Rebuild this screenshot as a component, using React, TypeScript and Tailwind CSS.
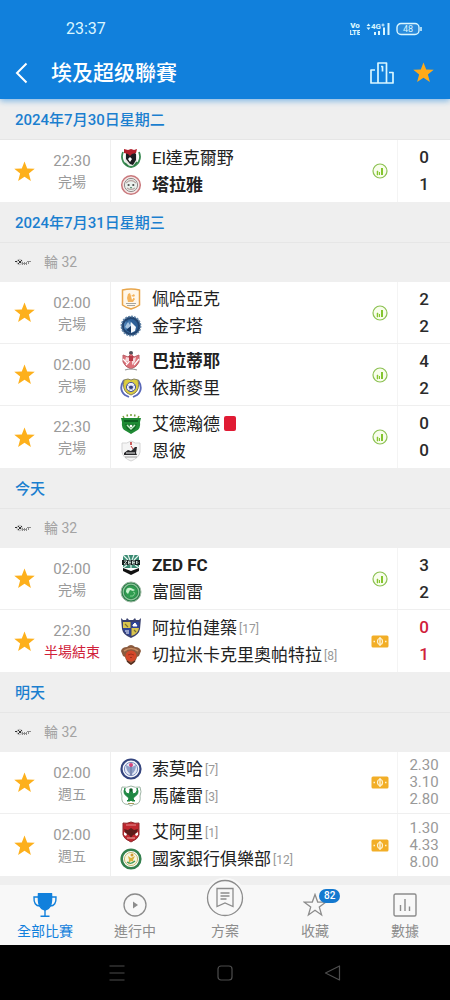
import React from 'react';

type CrestName =
  | 'dakhleya' | 'talaea' | 'pharco' | 'pyramids' | 'baladiyat' | 'ismaily' | 'ittihad' | 'enppi'
  | 'zed' | 'future' | 'mokawloon' | 'ceramica' | 'smouha' | 'masry' | 'ahly' | 'nbe';

interface Team {
  name: string;
  crest: CrestName;
  rank?: number;
  winner?: boolean;
  redCard?: boolean;
}

interface Match {
  time: string;
  status: string;
  teams: Team[];
  scores?: string[];
  odds?: string[];
  live?: boolean;
  badge: 'stats' | 'bet';
}

interface Day {
  title: string;
  round?: string;
  matches: Match[];
}

const days: Day[] = [
  {
    title: '2024年7月30日星期二',
    matches: [
      {
        time: '22:30', status: '完場', badge: 'stats', scores: ['0', '1'],
        teams: [{ name: 'El達克爾野', crest: 'dakhleya' }, { name: '塔拉雅', crest: 'talaea', winner: true }],
      },
    ],
  },
  {
    title: '2024年7月31日星期三',
    round: '輪 32',
    matches: [
      {
        time: '02:00', status: '完場', badge: 'stats', scores: ['2', '2'],
        teams: [{ name: '佩哈亞克', crest: 'pharco' }, { name: '金字塔', crest: 'pyramids' }],
      },
      {
        time: '02:00', status: '完場', badge: 'stats', scores: ['4', '2'],
        teams: [{ name: '巴拉蒂耶', crest: 'baladiyat', winner: true }, { name: '依斯麥里', crest: 'ismaily' }],
      },
      {
        time: '22:30', status: '完場', badge: 'stats', scores: ['0', '0'],
        teams: [{ name: '艾德瀚德', crest: 'ittihad', redCard: true }, { name: '恩彼', crest: 'enppi' }],
      },
    ],
  },
  {
    title: '今天',
    round: '輪 32',
    matches: [
      {
        time: '02:00', status: '完場', badge: 'stats', scores: ['3', '2'],
        teams: [{ name: 'ZED FC', crest: 'zed', winner: true }, { name: '富圖雷', crest: 'future' }],
      },
      {
        time: '22:30', status: '半場結束', badge: 'bet', scores: ['0', '1'], live: true,
        teams: [{ name: '阿拉伯建築', crest: 'mokawloon', rank: 17 }, { name: '切拉米卡克里奧帕特拉', crest: 'ceramica', rank: 8 }],
      },
    ],
  },
  {
    title: '明天',
    round: '輪 32',
    matches: [
      {
        time: '02:00', status: '週五', badge: 'bet', odds: ['2.30', '3.10', '2.80'],
        teams: [{ name: '索莫哈', crest: 'smouha', rank: 7 }, { name: '馬薩雷', crest: 'masry', rank: 3 }],
      },
      {
        time: '02:00', status: '週五', badge: 'bet', odds: ['1.30', '4.33', '8.00'],
        teams: [{ name: '艾阿里', crest: 'ahly', rank: 1 }, { name: '國家銀行俱樂部', crest: 'nbe', rank: 12 }],
      },
    ],
  },
];

// Each crest is drawn on a 22x22 grid
const crests: Record<CrestName, React.ReactNode> = {
  dakhleya: (
    <>
      <path d="M3 5C0 12 4 19 11 20C18 19 22 12 19 5" fill="#fff" stroke="#3c8b54" strokeWidth="1.8" />
      <ellipse cx="11" cy="11" rx="6.5" ry="7.5" fill="#e8e8e4" />
      <path d="M6 5l3 2 4-3 3 3v6l-3 5-3-1-4-5z" fill="#1c1c20" />
      <path d="M4 2l4 1 3-1 3 1 3-1-1 4-4 1-2 2-2-2-4-1z" fill="#b3202c" />
      <path d="M8 12l2-2 2 2-2 3z" fill="#fff" />
      <path d="M5 16l3 3M17 15l-3 4" stroke="#2c7a43" strokeWidth="1.5" />
    </>
  ),
  talaea: (
    <>
      <circle cx="11" cy="11" r="9.3" fill="#f4e5e4" stroke="#c9787c" strokeWidth="1.5" />
      <circle cx="11" cy="11" r="6.6" fill="#e9f0ec" stroke="#8f8a8a" strokeWidth="1" />
      <path d="M6 9q5-5 10 0M7 14q4 3 8 0" fill="none" stroke="#b9a7a4" strokeWidth="1.2" />
      <circle cx="8.6" cy="11" r="1.1" fill="#4b4b4b" />
      <circle cx="13.3" cy="11" r="1.1" fill="#4b4b4b" />
      <path d="M10 13h2l-1 2z" fill="#3d7a5c" />
    </>
  ),
  pharco: (
    <>
      <path d="M2.500 2Q11 0 19.500 2V17Q17 19 11 21Q5 19 2.500 17Z" fill="#fff7ea" stroke="#e8a54a" strokeWidth="1.5" />
      <path d="M8 6l2-1 1 3 3-2 1 2-2 1 2 2-2 3H8l-1-4z" fill="#f5b45c" />
      <path d="M11 8l3 1-2 3z" fill="#fff" />
      <path d="M6 15.500h10M7 17.500h8" stroke="#a5a5a0" />
    </>
  ),
  pyramids: (
    <>
      <circle cx="11" cy="11" r="9.600" fill="#22446f" stroke="#6486a8" strokeWidth="1.600" strokeDasharray="2 1" />
      <circle cx="11" cy="11" r="7" fill="#2d5f96" />
      <path d="M4 13V9l2-3 1 3 2-4 2 3v10l-4-2z" fill="#4c80b4" />
      <path d="M5 12l3-5 2 3 1-4v5l-3 3z" fill="#a9c6e2" />
      <path d="M11 7l5 5-1 4-4 2z" fill="#f4f8fb" />
      <path d="M11 11v7l-5-3z" fill="#173a66" />
    </>
  ),
  baladiyat: (
    <>
      <circle cx="11" cy="3" r="2" fill="#525058" />
      <path d="M3 5l5 2 3-3 3 3 5-2v7q-2 5-8 7q-6-2-8-7z" fill="#dc7078" stroke="#b96168" />
      <path d="M6 7l4 1v4l-5-1zM12 9l4-2-1 5-3 3z" fill="#fff" fillOpacity=".75" />
      <path d="M3 9l4 4M19 9l-5 6M6 15l3-3" stroke="#fff" strokeWidth="1.200" />
      <path d="M9 6h4v5H9z" fill="#b73845" />
      <path d="M5 20q6-2 12 0" stroke="#969696" strokeWidth="1.200" fill="none" />
    </>
  ),
  ismaily: (
    <>
      <path d="M4 3Q-2 12 5 18L9 20M18 3Q24 12 17 18L13 20" fill="none" stroke="#5968b8" strokeWidth="1.800" />
      <path d="M4 3l4-1 3 1 3-1 4 1q2 9-3 13l-4 2-4-2Q2 12 4 3z" fill="#dccd3f" stroke="#837f61" />
      <circle cx="11" cy="10" r="4.600" fill="#eef0ff" stroke="#4d5796" />
      <path d="M9.800 9h2.400l.8 1.800-2 1.500-2-1.500zM7 8l1.500 1M15 8l-1.500 1M9 14l.5-1.500M13 14l-.5-1.500" fill="#34437f" stroke="#34437f" strokeWidth=".6" />
    </>
  ),
  ittihad: (
    <>
      <path d="M3 3l1 2M7 1.500l.5 2M11 1v2M15 1.500l-.5 2M19 3l-1 2" stroke="#79a13c" strokeWidth="1.500" />
      <path d="M1 5h20l-1 4q1 7-4 9l-5 3-5-3q-5-2-4-9z" fill="#1f8a34" />
      <path d="M4 7h14v2H4z" fill="#0c5f1f" />
      <path d="M5 11l4 1 2-1 2 1 4-1-2 5-4 2-4-2z" fill="#126b25" />
      <path d="M7 12l4 4 4-4" fill="none" stroke="#c7ecc9" strokeWidth="1.500" />
      <circle cx="11" cy="13" r="1.300" fill="#fff" />
    </>
  ),
  enppi: (
    <>
      <path d="M2 3q5 1 9-2 4 3 9 2v9q-1 6-9 9-8-3-9-9z" fill="#f5f5f5" stroke="#d4d4d4" />
      <path d="M11 2v3" stroke="#c23838" strokeWidth="1.600" />
      <path d="M11 6l2 3" stroke="#c23838" />
      <path d="M4 13l4-3 3 1 4-4h2l-1 6 1 2H4z" fill="#28282b" />
      <path d="M6 13h9" stroke="#f2f2f2" />
      <path d="M5 17h12" stroke="#9a9a9a" />
    </>
  ),
  zed: (
    <>
      <path d="M3 1h16v13H3z" fill="#3a8a72" />
      <path d="M3 1l5 5M8 1l2 5M14 1l-2 5M19 1l-5 5M3 14l4-3M19 14l-4-3M11 10v4" stroke="#e6f5ef" strokeWidth="1.200" />
      <path d="M2 6h18v5H2z" fill="#16211f" />
      <path d="M4 7h3l-3 3h3M11 7H8.500v3H11M8.500 8.500H11M15 7h-2.500v3H15M12.500 8.500H15M16.500 7v3q3-1.500 0-3" fill="none" stroke="#e9f7f1" strokeWidth=".8" />
      <path d="M3 14l8 3 8-3v3l-8 4-8-4z" fill="#111" />
    </>
  ),
  future: (
    <>
      <circle cx="11" cy="11" r="10" fill="#2b7d49" stroke="#9db8a2" />
      <circle cx="11" cy="11" r="7.800" fill="none" stroke="#8dc79b" strokeWidth="1.200" />
      <circle cx="11" cy="11" r="6.500" fill="#2f9c50" />
      <path d="M6 11q0-5 5-4l4 2-2 1-3-1-1 2-1 2z" fill="#c9f2cf" />
      <path d="M13 11l2 1-2 3h-3" fill="none" stroke="#7fcd90" />
    </>
  ),
  mokawloon: (
    <>
      <path d="M1 1l2 2h3l1-2 2 2h4l2-2 1 2h3l2-2-1 11q-1 6-9 9-8-3-9-9z" fill="#39406d" />
      <path d="M3 5h7.500v6H3zM11.500 11H19q-1 6-7.500 8z" fill="#d9c44f" />
      <path d="M11.500 5H19v6h-7.500zM3 11h7.500v8Q4 17 3 11z" fill="#2f4497" />
      <path d="M13 8l2-2 2 3h-4zM5 14h4M6 16h3" stroke="#fff" fill="#fff" />
      <path d="M5 7l3 3M14 13l2 2" stroke="#7b7031" strokeWidth="1.200" />
    </>
  ),
  ceramica: (
    <>
      <path d="M1 7q1-4 6-4 4-4 8 0 5 0 6 4l-2 5-2 1q-1 5-6 8-5-3-6-8l-2-1z" fill="#8b5a3d" />
      <path d="M4 7q7-5 14 0" fill="none" stroke="#c98d62" strokeWidth="1.600" />
      <circle cx="11" cy="12" r="5.500" fill="#d4482a" />
      <path d="M8 11q3-2 6 0M10 14l1-1 1 1" fill="none" stroke="#a32f1d" />
      <path d="M7 17l4 3 4-3" fill="none" stroke="#512c20" strokeWidth="1.300" />
    </>
  ),
  smouha: (
    <>
      <circle cx="11" cy="11" r="9.500" fill="#f4f6fb" stroke="#35457e" strokeWidth="2.200" />
      <circle cx="11" cy="11" r="6.600" fill="#e5eaf6" stroke="#7c8cbb" />
      <path d="M6 7l4 2v7q-4-3-4-9zM16 7l-4 2v7q4-3 4-9z" fill="#8fa1c9" />
      <path d="M11 7v10" stroke="#4f5f94" strokeWidth="1.400" />
      <circle cx="11" cy="7" r="2" fill="#d5447b" />
    </>
  ),
  masry: (
    <>
      <path d="M2 2q5 1 9-1 4 2 9 1 2 5 0 9 1 6-3 8-4 0-6 2-2-2-6-2-4-2-3-8-2-4 0-9z" fill="#fff" stroke="#9fb5a5" />
      <path d="M5 3q-1 5 4 6l1-3h2l1 3q5-1 4-6 3 6-3 9l-1 2 2 2h-3l-1-1-1 1H7l2-2-1-2Q2 9 5 3z" fill="#1f8843" stroke="#1f8843" />
      <circle cx="11" cy="5" r="1.800" fill="#145d2c" />
      <path d="M8 18.500h6" stroke="#a99b5b" />
    </>
  ),
  ahly: (
    <>
      <path d="M3 2q4 1 8-1 4 2 8 1v12q-1 4-8 7-7-3-8-7z" fill="#c0272f" stroke="#8f2a2d" />
      <path d="M6 4h10" stroke="#e58d8d" />
      <path d="M4 8l4 1 3-2 3 2 4-1-2 5-3 1-2 3-2-3-3-1z" fill="#5e1d1b" />
      <path d="M4 11l3 2-1 2-2-1zM18 11l-3 2 1 2 2-1z" fill="#fff" />
      <path d="M7 17h8" stroke="#eab0ac" />
    </>
  ),
  nbe: (
    <>
      <circle cx="11" cy="11" r="9.300" fill="#fff" stroke="#34804e" strokeWidth="2.600" />
      <circle cx="11" cy="11" r="6.600" fill="#f7f4df" stroke="#b6a955" strokeWidth=".8" />
      <circle cx="12" cy="7" r="1.500" fill="#cf9b33" />
      <path d="M8 8l3 2 4-2-2 4 1 2-3-1-3 3 1-4z" fill="#d8b13b" />
      <path d="M7 14q4 3 8-1" stroke="#3d9a58" fill="none" strokeWidth="1.200" />
    </>
  ),
};

const Star = ({ className }: { className: string }) => (
  <svg viewBox="0 0 24 24" className={className} fill="currentColor" aria-hidden="true">
    <path d="M12 .5l3.100 8.100 8.600.3-6.700 5.400 2.300 8.500-7.300-4.800-7.300 4.800 2.300-8.500L.3 8.900l8.600-.3z" />
  </svg>
);

const StatsBadge = () => (
  <svg viewBox="0 0 16 16" className="size-4" fill="none" aria-hidden="true">
    <circle cx="8" cy="8" r="7" fill="#f8fdec" stroke="#8cc152" strokeWidth="1.200" />
    <path d="M5 8h1v4H5zM7 9h1v3H7zM9 5h2v7H9z" fill="#84c52f" />
    <path d="M5 8h1v4H5z" stroke="#84c52f" strokeWidth=".5" />
  </svg>
);

const BetBadge = () => (
  <svg viewBox="0 0 18 13" className="h-[13px] w-[18px]" fill="none" aria-hidden="true">
    <rect x=".5" y=".5" width="17" height="12" rx="1.500" fill="#f2ae27" />
    <ellipse cx="9" cy="6.500" rx="2.500" ry="3" stroke="#fff3d2" strokeWidth="1.200" />
    <path d="M9 2v9M2.500 6.500h1.500M14 6.500h1.500" stroke="#fff3d2" strokeWidth="1.400" />
  </svg>
);

const LeagueLogo = () => (
  <svg viewBox="0 0 16 8" className="h-2 w-4" fill="none" aria-hidden="true">
    <circle cx="4.500" cy="4" r="2.700" fill="#e4e4e4" stroke="#999" strokeWidth=".6" />
    <path d="M0 3h2v1H0zM3 2h1v1H3zM4 3h2v2H4zM3 5h1v1H3zM6 2h1v1H6z" fill="#333" />
    <path d="M7 4h1v3H7zM9 4h1v3H9zM11 4h1v3h-1zM13 4h1v2h-1zM12 3h4v1h-4zM8 5h3v1H8z" fill="#8c8c8c" />
  </svg>
);

const StatusBar = () => (
  <div className="flex h-[50px] items-end justify-between pr-7 pb-[11px] pl-[66px] text-[#d9f6ff]">
    <span className="text-base leading-5">23:37</span>
    <div className="flex h-5 items-center gap-[6px]">
      <svg viewBox="0 0 10 14" className="h-[14px] w-[10px]" fill="currentColor" fontWeight="900" textAnchor="middle">
        <text x="5" y="6" fontSize="8">Vo</text>
        <text x="5" y="13" fontSize="7">LTE</text>
      </svg>
      <svg viewBox="0 0 24 14" className="h-[14px] w-6" fill="currentColor">
        <path d="M.5 4L2.500 1.500 4.500 4zM.5 5.500h4L2.500 8z" />
        <text x="5" y="6.500" fontSize="8" fontWeight="700">4G</text>
        <path d="M15.500 2.500h3v1h-3zM16.500 1.500h1v3h-1zM8 10h2v3H8zM12 9h2v4h-2zM17 5.500h2V13h-2zM21.500 1h2v12h-2z" />
      </svg>
      <svg viewBox="0 0 26 14" className="h-[14px] w-[26px]" fill="none">
        <rect x="1" y="1.500" width="22" height="11" rx="4" fill="#2a8bdc" stroke="currentColor" strokeWidth="1.400" />
        <path d="M25 5v4" stroke="currentColor" strokeWidth="1.500" />
        <text x="12" y="10" fontSize="9" fill="currentColor" textAnchor="middle">48</text>
      </svg>
    </div>
  </div>
);

const Header = () => (
  <header className="relative z-10 bg-[#1180dc] shadow-[0_2px_6px_rgba(17,128,220,0.5)]">
    <StatusBar />
    <div className="flex h-[49px] items-center pr-4 pb-1 pl-[14px] text-white">
      <button aria-label="返回" className="flex h-8 w-[37px] items-center">
        <svg viewBox="0 0 14 22" className="h-[22px] w-[14px]" fill="none" stroke="currentColor" strokeWidth="2">
          <path d="M12.500 1.500L3 11l9.500 9.500" />
        </svg>
      </button>
      <h1 className="flex-1 text-[21px] leading-7 font-medium">埃及超级聯賽</h1>
      <button aria-label="排名" className="mr-[18px]">
        <svg viewBox="0 0 24 22" className="h-[22px] w-6" fill="none" stroke="#d9f6ff" strokeWidth="1.700" strokeLinejoin="round">
          <path d="M5 8H1v13h22V10.500h-4" />
          <path d="M8 21V1h8.500v20M11 4.500h1.500V9.500" />
        </svg>
      </button>
      <button aria-label="收藏聯賽" className="flex size-[22px] items-center justify-center">
        <Star className="size-[21px] text-[#ffaa18]" />
      </button>
    </div>
  </header>
);

const TeamLine = ({ team }: { team: Team }) => (
  <div className="flex h-[27px] items-center">
    <svg viewBox="0 0 22 22" className="mr-[10px] size-[22px] shrink-0" aria-hidden="true">{crests[team.crest]}</svg>
    <span className={`pt-[2px] text-[17px] whitespace-nowrap text-[#222] ${team.winner ? 'font-bold' : ''}`}>{team.name}</span>
    {team.redCard && <span className="ml-1 h-[15px] w-3 rounded-xs bg-[#e01b34]" />}
    {team.rank && <span className="ml-[2px] pt-[2px] text-xs text-[#999]">[{team.rank}]</span>}
  </div>
);

const MatchRow = ({ match }: { match: Match }) => (
  <li className="flex h-[62px] border-b border-[#efefef] bg-white last:border-b-0">
    <button aria-label="收藏比賽" className="flex w-12 items-center justify-center text-[#fdb01c]">
      <Star className="size-[21px]" />
    </button>
    <div className="flex w-[62px] flex-col items-center justify-center pt-[2px] pr-[14px] text-sm leading-[21px] whitespace-nowrap text-[#9a9a9a]">
      <span className="text-[15px]">{match.time}</span>
      <span className={match.live ? 'text-[#d0213a]' : ''}>{match.status}</span>
    </div>
    <div className="flex min-w-0 flex-1 flex-col justify-center border-l border-[#efefef] pl-[9px]">
      {match.teams.map((team) => <TeamLine key={team.name} team={team} />)}
    </div>
    <div className="flex w-[35px] shrink-0 items-center justify-center">
      {match.badge === 'stats' ? <StatsBadge /> : <BetBadge />}
    </div>
    <div className="flex w-[53px] shrink-0 flex-col items-center justify-center border-l border-[#f4f4f4]">
      {match.scores?.map((score, i) => (
        <span key={i} className={`text-[17px] leading-[27px] font-medium ${match.live ? 'text-[#d0213a]' : 'text-[#2b2b2b]'}`}>{score}</span>
      ))}
      {match.odds?.map((odd) => (
        <span key={odd} className="text-[15px] leading-[17px] text-[#999]">{odd}</span>
      ))}
    </div>
  </li>
);

const DaySection = ({ day }: { day: Day }) => (
  <section>
    <h2 className="flex h-[41px] items-center border-b border-[#e6e6e6] px-[15px] pt-[2px] text-[15px] font-medium text-[#1b7fcf]">{day.title}</h2>
    {day.round && (
      <div className="flex h-[39px] items-center gap-[13px] px-[15px] pb-[2px] text-sm text-[#a3a3a3]">
        <LeagueLogo />
        <span>{day.round}</span>
      </div>
    )}
    <ul>
      {day.matches.map((match) => <MatchRow key={match.teams[0].name} match={match} />)}
    </ul>
  </section>
);

const TabBar = () => (
  <nav className="grid h-[60px] grid-cols-5 bg-[#f8f8f8] text-sm leading-5 text-[#8c8c8c]">
    <a href="#all" aria-current="page" className="flex flex-col items-center justify-end gap-1 pb-1 text-[#1180dc]">
      <svg viewBox="0 0 24 24" className="size-6" fill="none" stroke="currentColor" strokeWidth="1.400">
        <path d="M5.500.5h13q.5 9-1 12-2 4-5.500 4.500Q8.500 16.500 6.500 12.500 5 9.500 5.500.5z" fill="currentColor" />
        <path d="M5 4H1q-.5 9 6 9M19 4h4q.5 9-6 9M12 17v6.300M7.500 23.300h9" />
      </svg>
      全部比賽
    </a>
    <a href="#live" className="flex flex-col items-center justify-end gap-1 pb-1">
      <svg viewBox="0 0 24 24" className="size-6" fill="none" stroke="currentColor" strokeWidth="1.300">
        <circle cx="12" cy="12" r="11" />
        <path d="M10 8.500v7l5-3.500z" fill="currentColor" stroke="none" />
      </svg>
      進行中
    </a>
    <a href="#plan" className="flex flex-col items-center justify-end pb-1">
      <svg viewBox="0 0 44 44" className="-mt-5 size-11 shrink-0" fill="none" stroke="currentColor" strokeWidth="1.300">
        <circle cx="22" cy="22" r="21.500" fill="#f8f8f8" stroke="none" />
        <circle cx="22" cy="21" r="17.500" />
        <path d="M14 11.500h16v18l-8-3.500-8 3.500zM17.500 16h9M17.500 19h9M17.500 22h6" />
      </svg>
      方案
    </a>
    <a href="#favorites" className="flex flex-col items-center justify-end gap-1 pb-1">
      <span className="relative">
        <svg viewBox="0 0 24 24" className="size-6" fill="none" stroke="currentColor" strokeWidth="1.300">
          <path d="M12 1.500l2.700 7.500 8 .2-6.400 4.900 2.300 7.900-6.600-4.700L5.400 22l2.300-7.900L1.300 9.200l8-.2z" />
        </svg>
        <span className="absolute -top-1 left-4 rounded-full bg-[#1479cf] px-[5px] text-[10px] leading-[14px] font-medium text-white">82</span>
      </span>
      收藏
    </a>
    <a href="#stats" className="flex flex-col items-center justify-end gap-1 pb-1">
      <svg viewBox="0 0 24 24" className="size-6" fill="none" stroke="currentColor" strokeWidth="1.400">
        <rect x="1" y="1" width="22" height="22" rx="1.500" />
        <path d="M7.500 18v-6M12 18V6M16.500 18v-4.500" />
      </svg>
      數據
    </a>
  </nav>
);

const SystemBar = () => (
  <div className="flex h-[55px] items-center justify-between bg-black px-[108px] text-[#4d4d4d]">
    <button aria-label="選單">
      <svg viewBox="0 0 18 18" className="size-[18px]" stroke="currentColor" strokeWidth="1.200">
        <path d="M1.500 2h15M1.500 9h15M1.500 16h15" />
      </svg>
    </button>
    <button aria-label="主畫面">
      <svg viewBox="0 0 18 18" className="size-[18px]" fill="none" stroke="currentColor" strokeWidth="1.200">
        <rect x="2" y="2" width="14" height="14" rx="3" />
      </svg>
    </button>
    <button aria-label="返回上頁">
      <svg viewBox="0 0 18 18" className="size-[18px]" fill="none" stroke="currentColor" strokeWidth="1.200" strokeLinejoin="round">
        <path d="M15.500 2v14L1.500 9z" />
      </svg>
    </button>
  </div>
);

export default function App() {
  return (
    <div className="flex min-h-screen flex-col bg-[#efefef] font-[Roboto,'Noto_Sans_CJK_TC',sans-serif]">
      <Header />
      <main className="flex-1">
        {days.map((day) => <DaySection key={day.title} day={day} />)}
      </main>
      <TabBar />
      <SystemBar />
    </div>
  );
}
